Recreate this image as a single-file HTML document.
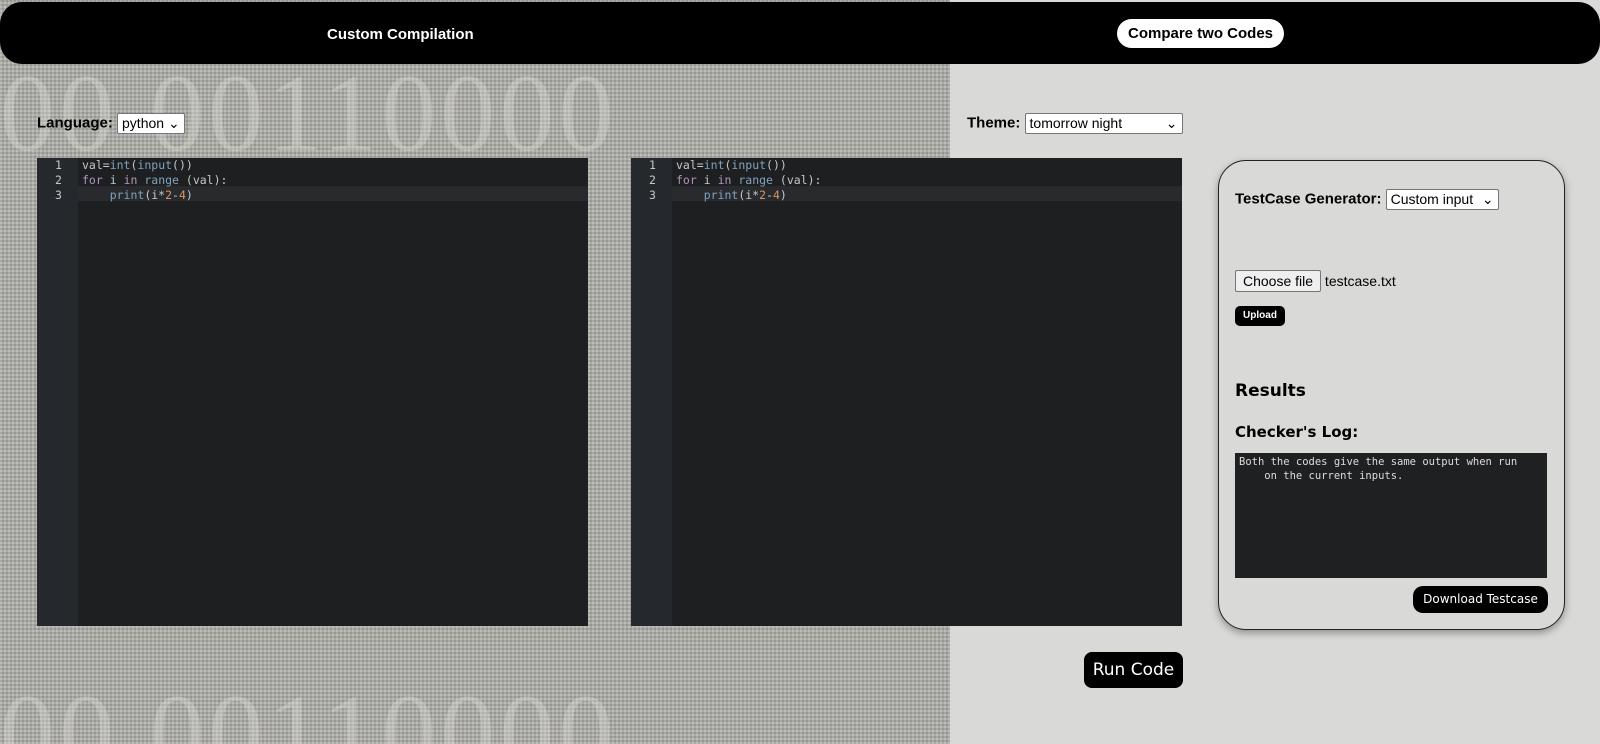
<!DOCTYPE html>
<html style="overflow:hidden;height:744px"><head><style>
html,body{margin:0;width:1600px;height:744px;overflow:hidden}
body{font-family:"Liberation Sans",sans-serif;position:relative;background:#d9d9d7}
.lbg{position:absolute;left:0;top:0;width:950px;height:744px;background:#a9a8a3;overflow:hidden;
background-image:repeating-linear-gradient(0deg,rgba(255,255,255,.12) 0 2px,rgba(0,0,0,.06) 2px 4px),repeating-linear-gradient(90deg,rgba(255,255,255,.12) 0 2px,rgba(0,0,0,.06) 2px 4px)}
.big{position:absolute;font-family:"Liberation Serif",serif;font-size:110px;color:rgba(225,225,220,.35);letter-spacing:4px;white-space:nowrap}
.nav{position:absolute;left:0;top:2px;width:1600px;height:62px;background:#000;border-radius:22px}
.nav a{position:absolute;color:#fff;font-weight:bold;font-size:15px;top:24px}
.nav .pill{background:#fff;color:#000;border-radius:16px;padding:6px 11px;top:17px;left:1117px}
.lab{position:absolute;font-weight:bold;font-size:15px;color:#000}
.sel{display:inline-block;background:#fff;border:1px solid #767676;border-radius:2px;font-weight:normal;font-size:14px;padding:1px 4px;vertical-align:middle}
.ed{position:absolute;top:158px;width:551px;height:468px;background:#1d1f21}
.gut{position:absolute;left:0;top:0;width:41px;height:100%;background:#25282c}
.ln{font-family:"DejaVu Sans Mono",monospace;font-size:11.5px;line-height:15px;color:#c5c8c6;white-space:pre;position:absolute;top:0}
.hl{position:absolute;left:41px;top:28px;right:0;height:15px;background:#282a2e}
.k{color:#b294bb}.f{color:#81a2be}.n{color:#de935f}
.card{position:absolute;left:1218px;top:160px;width:345px;height:468px;background:#d9d9d8;border:1px solid #222;border-radius:28px;box-shadow:0 3px 8px rgba(0,0,0,.35)}
.btn{position:absolute;background:#000;color:#fff;border-radius:8px}
</style></head><body>
<div class="lbg">
<div class="big" style="left:0;top:50px">00 00110000</div>
<div class="big" style="left:0;top:670px">00 00110000</div>
</div>
<div class="nav"><a style="left:327px">Custom Compilation</a><a class="pill">Compare two Codes</a></div>
<div class="lab" style="left:37px;top:113px">Language: <span class="sel">python ⌄</span></div>
<div class="lab" style="left:967px;top:113px">Theme: <span class="sel" style="width:148px">tomorrow night <span style="float:right">⌄</span></span></div>
<div class="ed" style="left:37px"><div class="gut"></div><div class="hl"></div>
<div class="ln" style="left:18px;top:0">1
2
3</div>
<div class="ln" style="left:45px">val=<span class="f">int</span>(<span class="f">input</span>())
<span class="k">for</span> i <span class="k">in</span> <span class="f">range</span> (val):
    <span class="f">print</span>(i*<span class="n">2</span>-<span class="n">4</span>)</div></div>
<div class="ed" style="left:631px"><div class="gut"></div><div class="hl"></div>
<div class="ln" style="left:18px;top:0">1
2
3</div>
<div class="ln" style="left:45px">val=<span class="f">int</span>(<span class="f">input</span>())
<span class="k">for</span> i <span class="k">in</span> <span class="f">range</span> (val):
    <span class="f">print</span>(i*<span class="n">2</span>-<span class="n">4</span>)</div></div>
<div class="btn" style="left:1084px;top:652px;width:99px;height:36px;font-family:'DejaVu Sans',sans-serif;font-size:17px;line-height:36px;text-align:center">Run Code</div>
<div class="card">
<div class="lab" style="left:16px;top:28px">TestCase Generator: <span class="sel" style="width:103px">Custom input <span style="float:right">⌄</span></span></div>
<div style="position:absolute;left:16px;top:109px;font-size:14px"><span style="display:inline-block;background:#efefef;border:1px solid #767676;border-radius:2px;padding:2px 7px">Choose file</span> testcase.txt</div>
<div class="btn" style="left:16px;top:145px;width:50px;height:20px;font-size:10px;font-weight:bold;line-height:20px;text-align:center;border-radius:5px">Upload</div>
<div style="position:absolute;left:16px;top:220px;font-family:'DejaVu Sans',sans-serif;font-weight:bold;font-size:17px">Results</div>
<div style="position:absolute;left:16px;top:262px;font-family:'DejaVu Sans',sans-serif;font-weight:bold;font-size:15px">Checker's Log:</div>
<div style="position:absolute;left:16px;top:292px;width:312px;height:125px;background:#1f2022;color:#ddd;font-family:'DejaVu Sans Mono',monospace;font-size:10.5px;line-height:14px;padding:2px 4px;box-sizing:border-box">Both the codes give the same output when run<br>&nbsp;&nbsp;&nbsp;&nbsp;on the current inputs.</div>
<div class="btn" style="left:194px;top:425px;width:135px;height:27px;font-family:'DejaVu Sans',sans-serif;font-size:12px;line-height:27px;text-align:center;border-radius:10px">Download Testcase</div>
</div>
</body></html>
